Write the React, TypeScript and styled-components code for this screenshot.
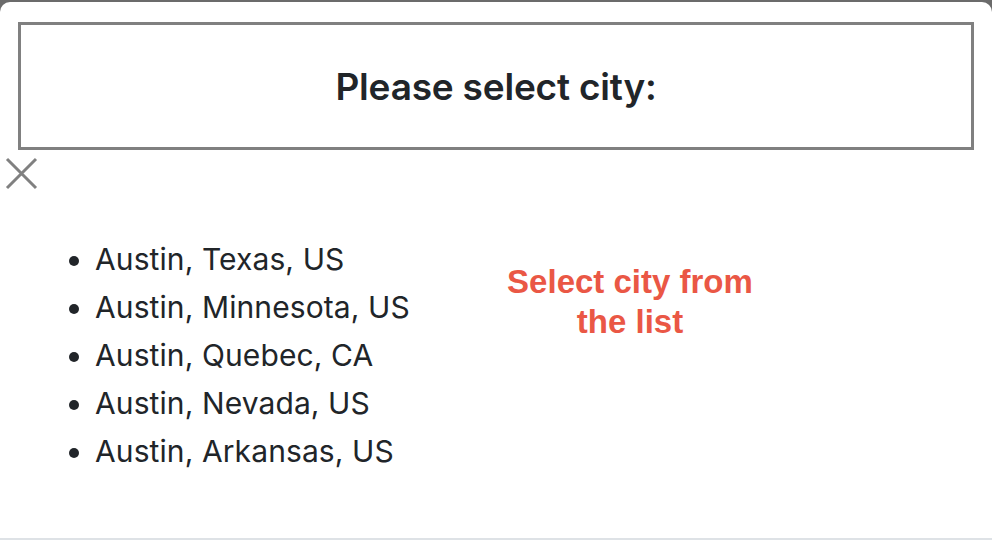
import React, { FC } from 'react';
import styled, { createGlobalStyle } from 'styled-components';

const GlobalStyle = createGlobalStyle`
    html, body {
        margin: 0;
        padding: 0;
        background: #6b6b6b;
        overflow: hidden;
    }
    body {
        font-family: Inter, "Noto Sans", sans-serif;
        color: #212529;
    }
`;

const Modal = styled.div`
    margin-top: 2px;
    height: 538px;
    background: #fff;
    border-radius: 10px 10px 0 0;
    border-bottom: 2px solid #dee2e6;
    padding-top: 20px;
    box-sizing: border-box;
`;

const Header = styled.div`
    margin: 0 18px;
    height: 128px;
    border: 3px solid #808080;
    box-sizing: border-box;
    display: flex;
    align-items: center;
    justify-content: center;

    h2 {
        margin: 0;
        font-size: 37px;
        font-weight: 600;
        letter-spacing: -0.2px;
    }
`;

const CloseButton = styled.button`
    display: block;
    margin: 7px 0 0 5px;
    padding: 0;
    width: 33px;
    height: 33px;
    border: none;
    background: none;
    cursor: pointer;

    svg {
        display: block;
    }
`;

const Body = styled.div`
    display: flex;
    flex-direction: row;
    padding-top: 45px;
`;

const CityList = styled.ul`
    margin: 0;
    padding-left: 95px;
    width: 400px;
    list-style: disc;
    font-size: 30px;
    line-height: 48px;
    letter-spacing: 0.1px;

    li {
        cursor: pointer;
    }
`;

const Message = styled.div`
    width: 300px;
    margin-left: -15px;
    margin-top: 27px;
    text-align: center;
    color: #ea5745;
    font-family: "Liberation Sans", Arial, sans-serif;
    font-weight: bold;
    font-size: 33px;
    line-height: 40px;
`;

const cities = [
    'Austin, Texas, US',
    'Austin, Minnesota, US',
    'Austin, Quebec, CA',
    'Austin, Nevada, US',
    'Austin, Arkansas, US',
];

const App: FC = () => {
    return (
        <>
            <GlobalStyle />
            <Modal>
                <Header>
                    <h2>Please select city:</h2>
                </Header>
                <CloseButton aria-label="close">
                    <svg width="33" height="33" viewBox="0 0 33 33">
                        <path d="M2 2 L31 31 M31 2 L2 31" stroke="#808080" strokeWidth="3" fill="none" />
                    </svg>
                </CloseButton>
                <Body>
                    <CityList>
                        {cities.map((c) => (
                            <li key={c}>{c}</li>
                        ))}
                    </CityList>
                    <Message>Select city from the list</Message>
                </Body>
            </Modal>
        </>
    );
};

export default App;
